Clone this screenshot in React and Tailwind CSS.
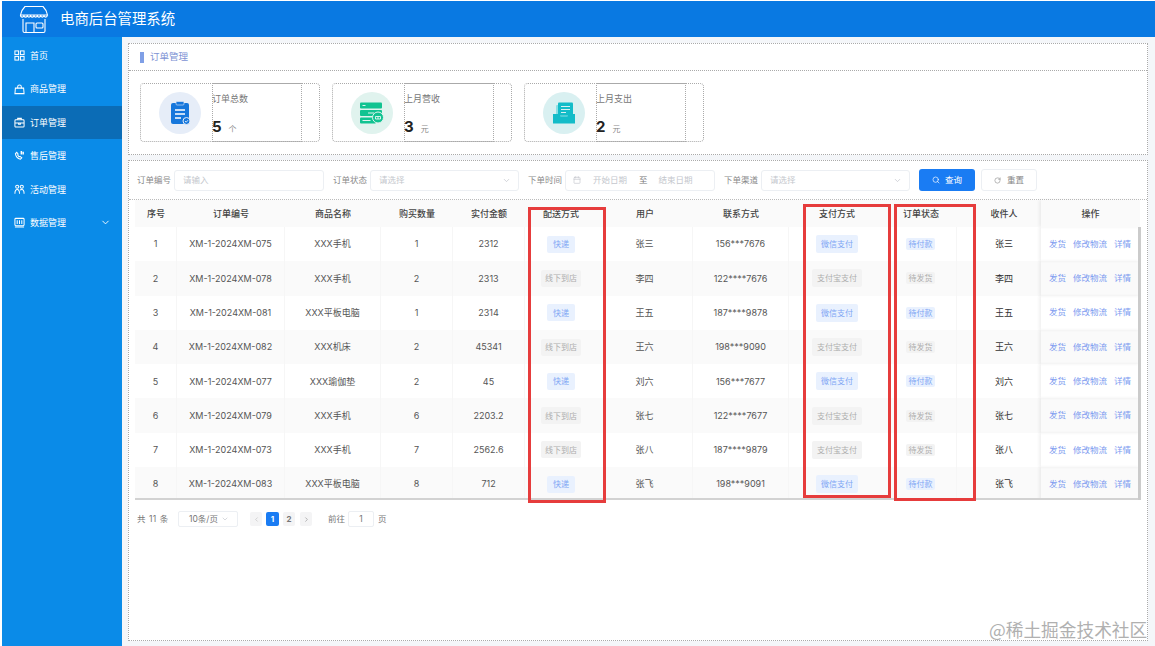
import React from "react";
import { ChevronDown, ChevronLeft, ChevronRight, Search, RotateCw, Calendar } from "lucide-react";

const rows = [
  ["1", "XM-1-2024XM-075", "XXX手机", "1", "2312", 0, "张三", "156***7676", 0, 0],
  ["2", "XM-1-2024XM-078", "XXX手机", "2", "2313", 1, "李四", "122****7676", 1, 1],
  ["3", "XM-1-2024XM-081", "XXX平板电脑", "1", "2314", 0, "王五", "187****9878", 0, 0],
  ["4", "XM-1-2024XM-082", "XXX机床", "2", "45341", 1, "王六", "198***9090", 1, 1],
  ["5", "XM-1-2024XM-077", "XXX瑜伽垫", "2", "45", 0, "刘六", "156***7677", 0, 0],
  ["6", "XM-1-2024XM-079", "XXX手机", "6", "2203.2", 1, "张七", "122****7677", 1, 1],
  ["7", "XM-1-2024XM-073", "XXX手机", "7", "2562.6", 1, "张八", "187****9879", 1, 1],
  ["8", "XM-1-2024XM-083", "XXX平板电脑", "8", "712", 0, "张飞", "198***9091", 0, 0],
];
const heads = ["序号", "订单编号", "商品名称", "购买数量", "实付金额", "配送方式", "用户", "联系方式", "支付方式", "订单状态", "收件人", "操作"];
const gridCols = "grid grid-cols-[42px_108px_96px_72px_72px_72px_96px_96px_96px_72px_84px_99px]";

function Tag({ kind, className, children }) {
  const colour = kind === 0 ? "bg-[#e9f1fe] text-[#7ea6f4]" : "bg-[#f3f3f3] text-[#aeaeae]";
  return <span className={`flex items-center justify-center rounded-[2px] text-[8px] ${colour} ${className}`}>{children}</span>;
}

const Stroke = ({ children }) => (
  <svg width="11" height="11" viewBox="0 0 12 12" fill="none" stroke="white" strokeWidth="1.1">{children}</svg>
);

const menu = [
  ["首页", <Stroke><rect x="1" y="1" width="4" height="4" /><rect x="7" y="1" width="4" height="4" /><rect x="1" y="7" width="4" height="4" /><rect x="7" y="7" width="4" height="4" /></Stroke>],
  ["商品管理", <Stroke><path d="M1.5 4.5h9l.5 6h-10z" /><path d="M4 4.5V3a2 2 0 0 1 4 0v1.5" /></Stroke>],
  ["订单管理", <Stroke><rect x="1" y="3" width="10" height="8" rx="1" /><path d="M1 6.5h10M4 3V1.500h4V3M5 6.500v1.500h2V6.500" /></Stroke>],
  ["售后管理", <Stroke><path d="M1.500 4c.5 3 2.500 5.500 5.500 6l1.500-1.500-2-1.500-1 .5-1.500-2 .5-1L3 2.500z" /><path d="M8 1v4M10 2v3" strokeWidth="1.600" /></Stroke>],
  ["活动管理", <Stroke><circle cx="3.500" cy="3" r="1.700" /><circle cx="8.500" cy="3" r="1.700" /><path d="M1 10.500c0-3 1-4.500 2.500-4.500s2.500 1.500 2.500 4.500M6.500 6.500C7 6.200 7.800 6 8.500 6 10 6 11 7.500 11 10.500" /></Stroke>],
  ["数据管理", <Stroke><rect x="1" y="1.500" width="10" height="8" rx="1" /><path d="M3.500 3.500v4M6 3.500v4M8.500 3.500v4M1 11h10" /></Stroke>],
];

const stats = [
  ["订单总数", "5", "个", "bg-[#e6edf8]",
    <svg width="20" height="24" viewBox="0 0 20 24"><rect x="1" y="2" width="18" height="21" rx="2" fill="#1677dc" /><rect x="6" y="0.500" width="8" height="3.500" rx="1" fill="#1677dc" stroke="#e6edf8" strokeWidth=".6" /><path d="M5 9h10M5 13h10M5 17h6" stroke="white" strokeWidth="1.400" /><circle cx="16.500" cy="20" r="3.500" fill="#1677dc" stroke="#e6edf8" /><path d="M15 20l1.200 1.200 1.800-2" stroke="white" strokeWidth=".8" fill="none" /></svg>],
  ["上月营收", "3", "元", "bg-[#e0f3ee]",
    <svg width="24" height="22" viewBox="0 0 24 22"><rect x="0" y="0.500" width="22" height="6" rx="1" fill="#11c391" /><rect x="0" y="8" width="22" height="6" rx="1" fill="#11c391" /><rect x="0" y="15.500" width="16" height="6" rx="1" fill="#11c391" /><path d="M2.500 3.500h3M8 11h6M2.500 18.500h8" stroke="#e0f3ee" strokeWidth="1" /><circle cx="18" cy="15.500" r="5.500" fill="#11c391" stroke="#e0f3ee" /><path d="M15.500 14.500h5v2.500h-5zM18 14.500v2.500" stroke="white" strokeWidth=".8" fill="none" /></svg>],
  ["上月支出", "2", "元", "bg-[#d9f0f1]",
    <svg width="22" height="22" viewBox="0 0 22 22"><rect x="3" y="3" width="17" height="12" rx="1" fill="#8adfe4" /><rect x="5" y="0.500" width="15" height="13" rx="1" fill="#13bcc8" /><path d="M8 4.500h9M8 7.500h9M8 10.500h5" stroke="#d9f0f1" strokeWidth="1" /><path d="M0 12h6.500l1 2.500h7l1-2.500H22v9.500H0z" fill="#13bcc8" /></svg>],
];

function Field({ label, children, className }) {
  return (
    <div className={`flex items-center gap-[4px] ${className}`}>
      <span className="text-[8.500px] text-[#8a8a8a] w-[33px] whitespace-nowrap">{label}</span>
      {children}
    </div>
  );
}

function Select({ className }) {
  return (
    <div className={`h-[21px] rounded-[3px] border border-[#eceff3] flex items-center justify-between pl-[8px] pr-[7px] ${className}`}>
      <span className="text-[8.500px] text-[#c4c7cd]">请选择</span>
      <ChevronDown size={9} className="text-[#c4c7cd]" />
    </div>
  );
}

export default function App() {
  return (
    <div className="relative w-[1155px] h-[646px] overflow-hidden bg-white pt-[1px] pl-[2px] flex flex-col font-['Inter','Noto_Sans_CJK_SC',sans-serif] text-[9px] text-[#555]">
      <header className="h-[36px] shrink-0 bg-[#0979e2] flex items-center pl-[17px] gap-[11px]">
        <svg width="30" height="30" viewBox="0 0 30 30" fill="none" stroke="white" strokeWidth="1.100">
          <path d="M6 2.500h18c2 2 4 5 4.500 8.500H1.500C2 7.500 4 4.500 6 2.500z" />
          <path d="M1.500 11c0 2.800 3.400 2.800 3.400 0 0 2.800 3.400 2.800 3.400 0 0 2.800 3.300 2.800 3.300 0 0 2.800 3.400 2.800 3.400 0 0 2.800 3.300 2.800 3.300 0 0 2.800 3.400 2.800 3.400 0 0 2.800 3.300 2.800 3.300 0 0 2.800 3.300 2.800 3.300 0" />
          <path d="M4 15v12a1.500 1.500 0 0 0 1.500 1.500h19a1.500 1.500 0 0 0 1.500-1.500V15" />
          <path d="M7 28.500V19h8v9.500" />
          <rect x="17" y="19" width="7" height="5" rx="1" />
        </svg>
        <span className="text-[14.400px] text-white">电商后台管理系统</span>
      </header>
      <div className="flex flex-1 min-h-0">
        <aside className="w-[120px] shrink-0 bg-[#0a8be8] pt-[2px] text-white">
          {menu.map(([name, icon], i) => (
            <div key={name} className={`h-[33.400px] flex items-center pl-[12px] gap-[5px] text-[9px] ${i === 2 ? "bg-[#0b6cb6]" : ""}`}>
              {icon}
              <span className="flex-1">{name}</span>
              {i === 5 && <ChevronDown size={11} className="mr-[11px]" />}
            </div>
          ))}
        </aside>
        <main className="flex-1 min-w-0 bg-[#f4f6f9] pt-[6px] pl-[6px] pr-[7px] pb-[5px] flex flex-col gap-[5px]">
          <section className="bg-white border border-dotted border-[#aaa] h-[112px] shrink-0">
            <div className="h-[27px] border-b border-dotted border-[#aaa] flex items-center pl-[11px] pt-[1px] gap-[6px]">
              <span className="w-[4px] h-[11px] bg-[#7f9fe6]"></span>
              <span className="text-[9.500px] text-[#7d92d4]">订单管理</span>
            </div>
            <div className="pl-[11px] pt-[12px] flex gap-[12px]">
              {stats.map(([t, v, u, bg, icon]) => (
                <div key={t} className="w-[180px] h-[59px] border border-dotted border-[#aaa] rounded-[4px] flex">
                  <div className="w-[71px] flex items-center justify-center pl-[6px]">
                    <div className={`w-[42px] h-[42px] rounded-full flex items-center justify-center ${bg}`}>{icon}</div>
                  </div>
                  <div className="w-[90px] -my-[1px] border border-dotted border-[#aaa] pt-[8px] flex flex-col">
                    <span className="-ml-[1px] text-[9px] leading-[13px] text-[#777]">{t}</span>
                    <div className="-ml-[1px] flex items-baseline mt-[12px]">
                      <span className="text-[15px] leading-[20px] font-bold text-[#222]">{v}</span>
                      <span className="text-[8px] text-[#888] ml-[7px]">{u}</span>
                    </div>
                  </div>
                </div>
              ))}
            </div>
          </section>
          <section className="bg-white border border-dotted border-[#aaa] flex-1 min-h-0">
            <div className="h-[39px] border-b border-dotted border-[#bbb] flex items-center pl-[8px]">
              <Field label="订单编号" className="mr-[9px]">
                <div className="w-[150px] h-[21px] rounded-[3px] border border-[#eceff3] flex items-center pl-[8px] text-[8.500px] text-[#c4c7cd]">请输入</div>
              </Field>
              <Field label="订单状态" className="mr-[9px]"><Select className="w-[149px]" /></Field>
              <Field label="下单时间" className="mr-[9px]">
                <div className="w-[150px] h-[21px] rounded-[3px] border border-[#eceff3] flex items-center pl-[7px] text-[8.500px] text-[#c4c7cd]">
                  <Calendar size={8} />
                  <span className="ml-[12px]">开始日期</span>
                  <span className="ml-[12px] text-[#777]">至</span>
                  <span className="ml-[11px]">结束日期</span>
                </div>
              </Field>
              <Field label="下单渠道" className="mr-[9px]"><Select className="w-[149px]" /></Field>
              <button className="w-[56px] h-[22px] rounded-[3px] bg-[#1a7cf3] text-white flex items-center justify-center gap-[5px] text-[8.500px]">
                <Search size={8} />查询
              </button>
              <button className="ml-[6px] w-[56px] h-[22px] rounded-[3px] border border-[#eceff3] text-[#888] flex items-center justify-center gap-[6px] text-[8.500px]">
                <RotateCw size={7} />重置
              </button>
            </div>
            <div className="ml-[6px] w-[1005px] relative">
              <div className={`${gridCols} h-[27px] bg-[#fafafa] text-[#444] font-medium`}>
                {heads.map((h, i) => (
                  <div key={h} className={`flex items-center justify-center ${i === 10 ? "pl-[10px]" : ""} ${i === 11 ? "shadow-[-2px_0_3px_rgba(0,0,0,0.06)]" : ""}`}>{h}</div>
                ))}
              </div>
              <div className="h-[271px] overflow-hidden">
                {rows.map((r, i) => (
                  <div key={r[0]} className={`${gridCols} h-[34.300px] ${i % 2 ? "bg-[#fafafa]" : "bg-white"}`}>
                    <div className="flex items-center justify-center border-r border-[#f6f6f6]">{r[0]}</div>
                    <div className="flex items-center justify-center border-r border-[#f6f6f6] whitespace-nowrap">{r[1]}</div>
                    <div className="flex items-center justify-center border-r border-[#f6f6f6] whitespace-nowrap">{r[2]}</div>
                    <div className="flex items-center justify-center border-r border-[#f6f6f6]">{r[3]}</div>
                    <div className="flex items-center justify-center border-r border-[#f6f6f6]">{r[4]}</div>
                    <div className="flex items-center justify-center">
                      <Tag kind={r[5]} className={`h-[17px] ${r[5] ? "w-[40px]" : "w-[28px]"}`}>{r[5] ? "线下到店" : "快递"}</Tag>
                    </div>
                    <div className="flex items-center justify-center border-r border-[#f6f6f6]">{r[6]}</div>
                    <div className="flex items-center justify-center border-r border-[#f6f6f6] whitespace-nowrap">{r[7]}</div>
                    <div className="flex items-center justify-center">
                      <Tag kind={r[8]} className={`h-[18px] ${r[8] ? "w-[50px]" : "w-[42px]"}`}>{r[8] ? "支付宝支付" : "微信支付"}</Tag>
                    </div>
                    <div className="flex items-center justify-center border-r border-[#f6f6f6]">
                      <Tag kind={r[9]} className="h-[12px] w-[29px]">{r[9] ? "待发货" : "待付款"}</Tag>
                    </div>
                    <div className="flex items-center justify-center pl-[10px] text-[#333]">{r[6]}</div>
                    <div className="flex items-center pl-[8px] gap-[7px] text-[8.500px] text-[#7c9bf0] shadow-[-2px_0_3px_rgba(0,0,0,0.06)] whitespace-nowrap">
                      <span>发货</span><span>修改物流</span><span>详情</span>
                    </div>
                  </div>
                ))}
              </div>
              <div className="h-[2px] bg-[#d2d2d2]"></div>
              <div className="absolute -right-[1px] top-[27px] bottom-0 w-[3px] bg-[#cbcbcb]"></div>
            </div>
            <div className="flex items-center ml-[8px] mt-[11px] h-[16px] text-[8.500px] text-[#777]">
              <span className="w-[31px] tracking-[0.500px] whitespace-nowrap">共 11 条</span>
              <div className="ml-[10px] w-[60px] h-[16px] border border-[#eceff3] rounded-[2px] flex items-center justify-between pl-[10px] pr-[8px]">
                <span>10条/页</span>
                <ChevronDown size={8} className="text-[#c4c7cd]" />
              </div>
              <div className="ml-[12px] w-[12px] h-[14px] bg-[#f4f4f5] rounded-[2px] flex items-center justify-center text-[#bbb]"><ChevronLeft size={7} /></div>
              <div className="ml-[4px] w-[13px] h-[14px] bg-[#1a7cf3] rounded-[2px] text-white font-bold flex items-center justify-center text-[8px]">1</div>
              <div className="ml-[4px] w-[12px] h-[14px] bg-[#f4f4f5] rounded-[2px] font-bold flex items-center justify-center text-[8px]">2</div>
              <div className="ml-[5px] w-[12px] h-[14px] bg-[#f4f4f5] rounded-[2px] flex items-center justify-center text-[#888]"><ChevronRight size={7} /></div>
              <span className="ml-[16px]">前往</span>
              <div className="ml-[3px] w-[26px] h-[16px] border border-[#eceff3] rounded-[2px] flex items-center justify-center">1</div>
              <span className="ml-[4px]">页</span>
            </div>
          </section>
        </main>
      </div>

      <div className="absolute left-[528px] top-[207px] w-[78px] h-[296px] border-[3px] border-[#e63c3c] pointer-events-none"></div>
      <div className="absolute left-[803px] top-[204px] w-[88px] h-[294px] border-[3px] border-[#e63c3c] pointer-events-none"></div>
      <div className="absolute left-[894px] top-[204px] w-[82px] h-[297px] border-[3px] border-[#e63c3c] pointer-events-none"></div>
      <div className="absolute left-[989px] top-[617px] text-[17.700px] leading-[24px] text-[#b0b0b0] whitespace-nowrap font-['Noto_Sans_CJK_SC',sans-serif]">@稀土掘金技术社区</div>
    </div>
  );
}
